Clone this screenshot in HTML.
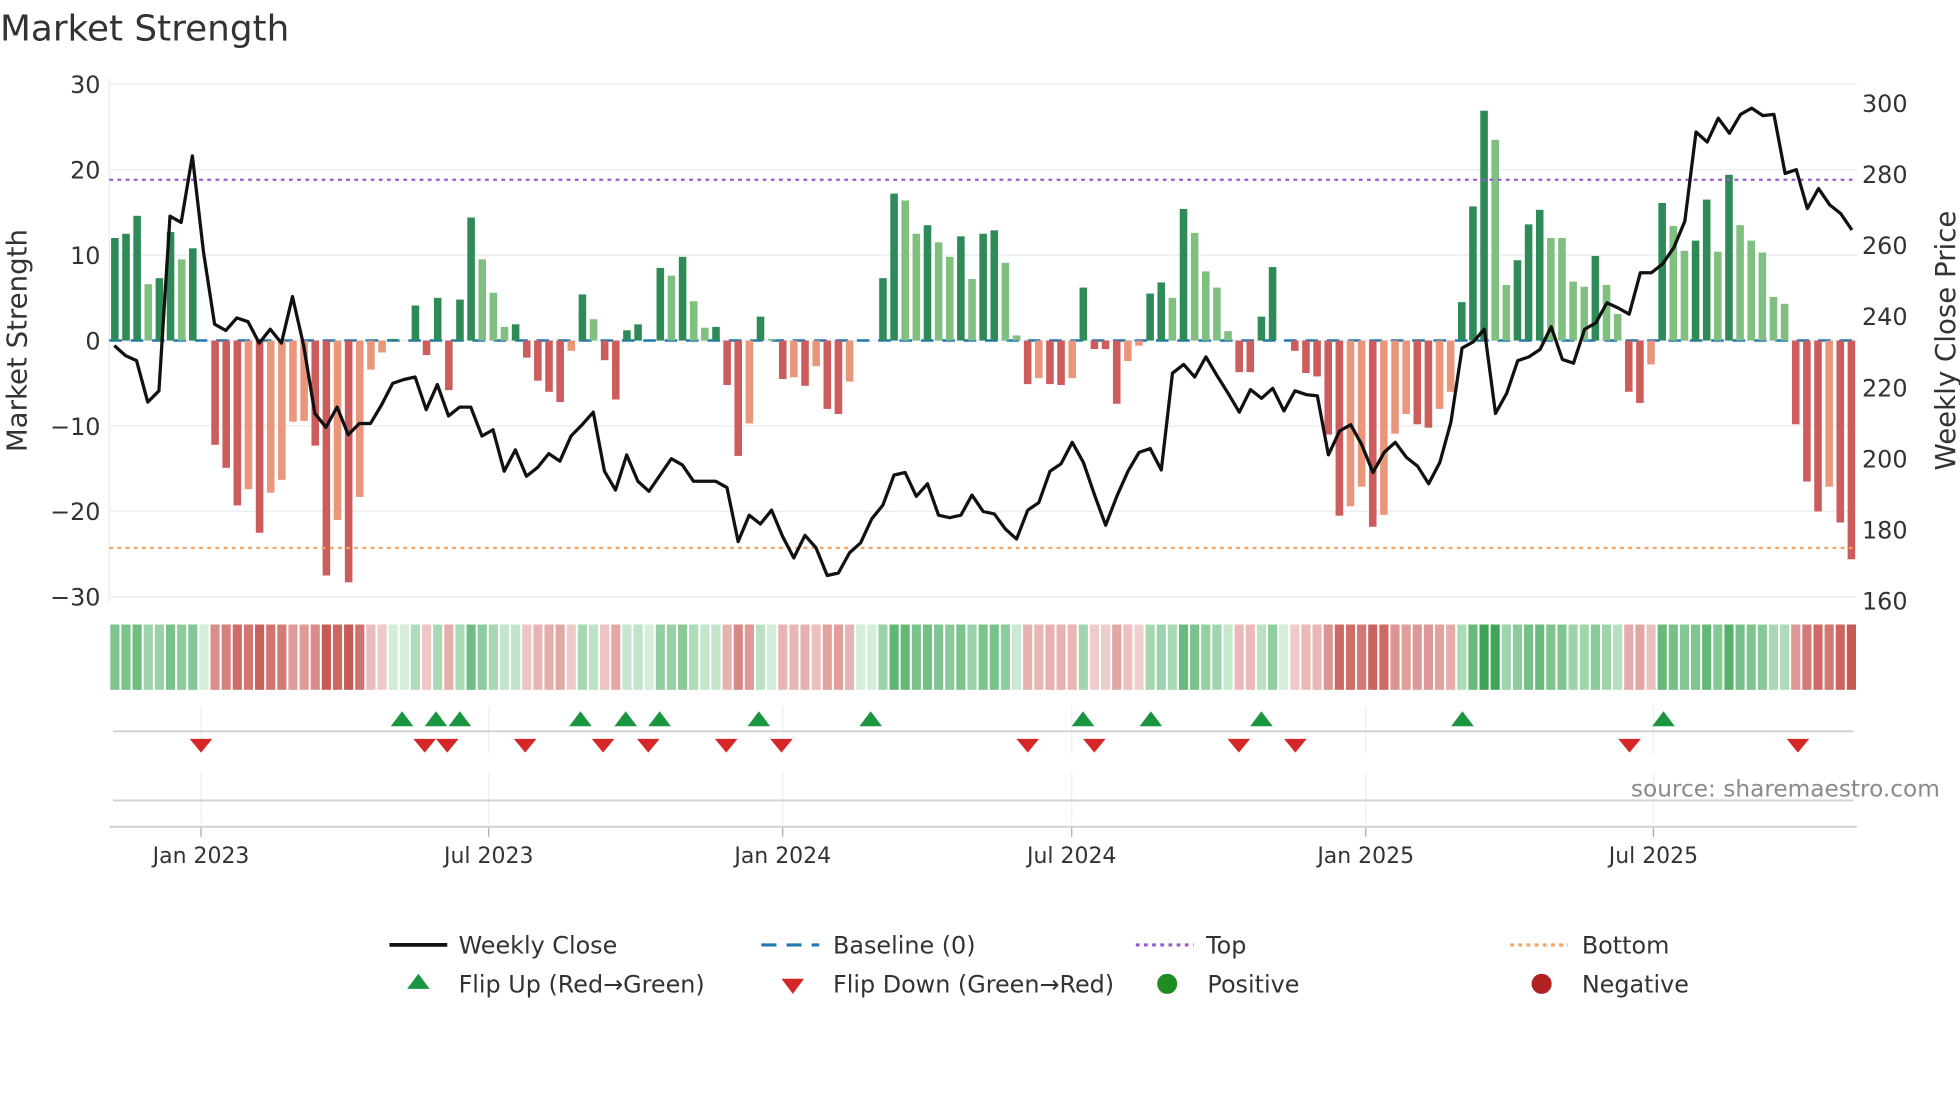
<!DOCTYPE html>
<html><head><meta charset="utf-8"><style>
html,body{margin:0;padding:0;background:#fff;width:1960px;height:1102px;overflow:hidden}
svg{display:block}
text{font-family:"DejaVu Sans","Liberation Sans",sans-serif;fill:#333}
</style></head><body>
<svg id="s" width="1960" height="1102" viewBox="0 0 1560 877" xmlns="http://www.w3.org/2000/svg">
<rect width="1560" height="877" fill="#fff"/>
<text x="0" y="32" font-size="28.5">Market Strength</text>
<g id="grid"></g>
<g id="bars"></g>
<g id="heat"></g>
<g id="tri"></g>
<text transform="translate(21,271) rotate(-90)" text-anchor="middle" font-size="22">Market Strength</text>
<text transform="translate(1556,271) rotate(-90)" text-anchor="middle" font-size="22">Weekly Close Price</text>
<text x="1544" y="634" text-anchor="end" font-size="18.5" fill="#8a8a8a" style="fill:#8a8a8a">source: sharemaestro.com</text>
<g font-size="19">
<line x1="310" y1="752" x2="356" y2="752" stroke="#111" stroke-width="3"/>
<text x="365" y="759">Weekly Close</text>
<line x1="606" y1="752" x2="652" y2="752" stroke="#1f77b4" stroke-width="2.5" stroke-dasharray="12,8"/>
<text x="663" y="759">Baseline (0)</text>
<line x1="904" y1="752" x2="950" y2="752" stroke="#9b59d0" stroke-width="2.5" stroke-dasharray="3,3.5"/>
<text x="960" y="759">Top</text>
<line x1="1202" y1="752" x2="1248" y2="752" stroke="#f4a460" stroke-width="2.5" stroke-dasharray="3,3.5"/>
<text x="1259" y="759">Bottom</text>
<polygon points="333,775 342,787 324,787" fill="#1a9641"/>
<text x="365" y="790">Flip Up (Red→Green)</text>
<polygon points="622,779 640,779 631,791" fill="#d62728"/>
<text x="663" y="790">Flip Down (Green→Red)</text>
<circle cx="929" cy="783" r="8" fill="#228b22"/>
<text x="961" y="790">Positive</text>
<circle cx="1227" cy="783" r="8" fill="#b22222"/>
<text x="1259" y="790">Negative</text>
</g>
</svg>
<script>
var NS="http://www.w3.org/2000/svg";
function el(p,t,a){var e=document.createElementNS(NS,t);for(var k in a)e.setAttribute(k,a[k]);p.appendChild(e);return e;}
var svg=document.getElementById('s');
var grid=document.getElementById('grid'),bars=document.getElementById('bars'),heat=document.getElementById('heat'),tri=document.getElementById('tri');
var L=87,R=1478,Y0=271,SU=6.8;
for(var v=-30;v<=30;v+=10){var y=Y0-v*SU;el(grid,'line',{x1:L,x2:R,y1:y,y2:y,stroke:'#eceef4','stroke-width':1.2});
var t=el(svg,'text',{x:80,y:y+7,'text-anchor':'end','font-size':19});t.textContent=(v<0?'\u2212'+(-v):v);}
el(grid,'line',{x1:L,x2:L,y1:62,y2:480,stroke:'#eceef4','stroke-width':1.2});
for(var p=160;p<=300;p+=20){var y=82+(300-p)*2.83;var t=el(svg,'text',{x:1482,y:y+7,'font-size':19});t.textContent=p;}
var d=[[12,1],[12.5,1],[14.6,1],[6.6,0],[7.3,1],[12.7,1],[9.5,0],[10.8,1],[0,1],
[-12.2,1],[-14.9,1],[-19.3,1],[-17.4,0],[-22.5,1],[-17.8,0],[-16.3,0],[-9.5,0],[-9.4,0],[-12.3,1],[-27.5,1],[-21,0],[-28.3,1],[-18.3,0],[-3.4,0],[-1.4,0],[0.2,1],[0,1],[4.1,1],[-1.7,1],[5,1],[-5.8,1],[4.8,1],[14.4,1],[9.5,0],[5.6,0],[1.6,0],[1.9,1],[-2,1],[-4.7,1],[-6,1],[-7.2,1],[-1.2,0],[5.4,1],[2.5,0],[-2.3,1],[-6.9,1],[1.2,1],[1.9,1],[0,1],[8.5,1],[7.6,0],[9.8,1],[4.6,0],[1.5,0],[1.6,1],[-5.2,1],[-13.5,1],[-9.7,0],[2.8,1],[0.2,0],[-4.5,1],[-4.3,0],[-5.3,1],[-3,0],[-8,1],[-8.6,1],[-4.8,0],[0,1],[0,1],[7.3,1],[17.2,1],[16.4,0],[12.5,0],[13.5,1],[11.5,0],[9.8,0],[12.2,1],[7.2,0],[12.5,1],[12.9,1],[9.1,0],[0.6,0],[-5.1,1],[-4.4,0],[-5.1,1],[-5.2,1],[-4.4,0],[6.2,1],[-1,1],[-1,1],[-7.4,1],[-2.4,0],[-0.6,0],[5.5,1],[6.8,1],[5,0],[15.4,1],[12.6,0],[8.1,0],[6.2,0],[1.1,0],[-3.7,1],[-3.7,1],[2.8,1],[8.6,1],[0,1],[-1.2,1],[-3.8,1],[-4.2,1],[-11,1],[-20.5,1],[-19.4,0],[-17.1,0],[-21.8,1],[-20.4,0],[-10.9,0],[-8.6,0],[-9.8,1],[-10.2,1],[-8,0],[-6,0],[4.5,1],[15.7,1],[26.9,1],[23.5,0],[6.5,0],[9.4,1],[13.6,1],[15.3,1],[12,0],[12,0],[6.9,0],[6.3,0],[9.9,1],[6.5,0],[3.1,0],[-6,1],[-7.3,1],[-2.8,0],[16.1,1],[13.4,0],[10.5,0],[11.7,1],[16.5,1],[10.4,0],[19.4,1],[13.5,0],[11.7,0],[10.3,0],[5.1,0],[4.3,0],[-9.8,1],[-16.5,1],[-20,1],[-17.1,0],[-21.3,1],[-25.6,1]];
var N=d.length,P=(R-L)/N,W=P*0.68;
el(bars,'line',{x1:L,x2:R,y1:Y0,y2:Y0,stroke:'#1f77b4','stroke-width':2,'stroke-dasharray':'10,7'});
function mix(a,b,t){var r=[];for(var i=0;i<3;i++)r.push(Math.round(a[i]+(b[i]-a[i])*t));return 'rgb('+r.join(',')+')';}
for(var i=0;i<N;i++){var v=d[i][0],dk=d[i][1],x=L+i*P+(P-W)/2;
 if(v!=0){var c=v>0?(dk?'#2e8b57':'#7fbf7f'):(dk?'#cd5c5c':'#e9967a');
 var y=v>0?Y0-v*SU:Y0,h=Math.abs(v)*SU;el(bars,'rect',{x:x,y:y,width:W,height:h,fill:c});}
 var t=Math.min(1,Math.abs(v)/24);t=Math.pow(t,0.8);
 var hc=v>=0?mix([212,238,218],[60,165,85],t):mix([242,214,214],[200,90,84],t);
 el(heat,'rect',{x:L+i*P+0.8,y:497,width:P-1.6,height:52,fill:hc});}
el(bars,'line',{x1:L,x2:R,y1:143,y2:143,stroke:'#9b59d0','stroke-width':1.8,'stroke-dasharray':'3,3.5'});
el(bars,'line',{x1:L,x2:R,y1:436,y2:436,stroke:'#f4a460','stroke-width':1.8,'stroke-dasharray':'3,3.5'});
var py=[275,283,287,320,311,172,177,124,200,258,263,253,256,273,262,273,236,275,329,340,324,346,337,337,322,305,302,300,326,306,331,324,324,347,342,375,358,379,372,361,367,347,338,328,375,390,362,383,391,378,365,370,383,383,383,388,431,410,417,406,427,444,426,436,458,456,440,432,413,402,378,376,395,385,410,412,410,394,407,409,421,429,406,400,375,369,352,368,394,418,395,375,360,357,374,297,290,300,284,299,313,328,310,317,309,327,311,314,315,362,343,338,354,376,360,352,364,371,385,368,336,277,272,262,329,313,287,284,278,260,286,289,262,257,241,245,250,217,217,210,197,176,105,113,94,106,91,86,92,91,138,135,166,150,163,170,183];
var pts=[];var n2=py.length;for(var i=0;i<n2;i++){pts.push((91+i*(1474-91)/(n2-1)).toFixed(1)+','+py[i]);}
el(bars,'polyline',{points:pts.join(' '),fill:'none',stroke:'#111','stroke-width':2.6,'stroke-linejoin':'round'});
var ticks=[[160,'Jan 2023'],[389,'Jul 2023'],[623,'Jan 2024'],[853,'Jul 2024'],[1087,'Jan 2025'],[1316,'Jul 2025']];
ticks.forEach(function(k){el(tri,'line',{x1:k[0],x2:k[0],y1:562,y2:600,stroke:'#eceef4','stroke-width':1});
el(tri,'line',{x1:k[0],x2:k[0],y1:615,y2:655,stroke:'#eceef4','stroke-width':1});
el(tri,'line',{x1:k[0],x2:k[0],y1:658,y2:666,stroke:'#aaa','stroke-width':1});
var t=el(tri,'text',{x:k[0],y:687,'text-anchor':'middle','font-size':17.5});t.textContent=k[1];});
el(tri,'line',{x1:90,x2:1475,y1:582,y2:582,stroke:'#d0d0d0','stroke-width':1.5});
el(tri,'line',{x1:90,x2:1475,y1:637,y2:637,stroke:'#d0d0d0','stroke-width':1.5});
el(tri,'line',{x1:87,x2:1478,y1:658,y2:658,stroke:'#d0d0d0','stroke-width':1.5});
[320,347,366,462,498,525,604,693,862,916,1004,1164,1324].forEach(function(x){el(tri,'polygon',{points:x+',566 '+(x+9)+',578 '+(x-9)+',578',fill:'#1a9641'});});
[160,338,356,418,480,516,578,622,818,871,986,1031,1297,1431].forEach(function(x){el(tri,'polygon',{points:(x-9)+',588 '+(x+9)+',588 '+x+',599',fill:'#d62728'});});
</script>
</body></html>
